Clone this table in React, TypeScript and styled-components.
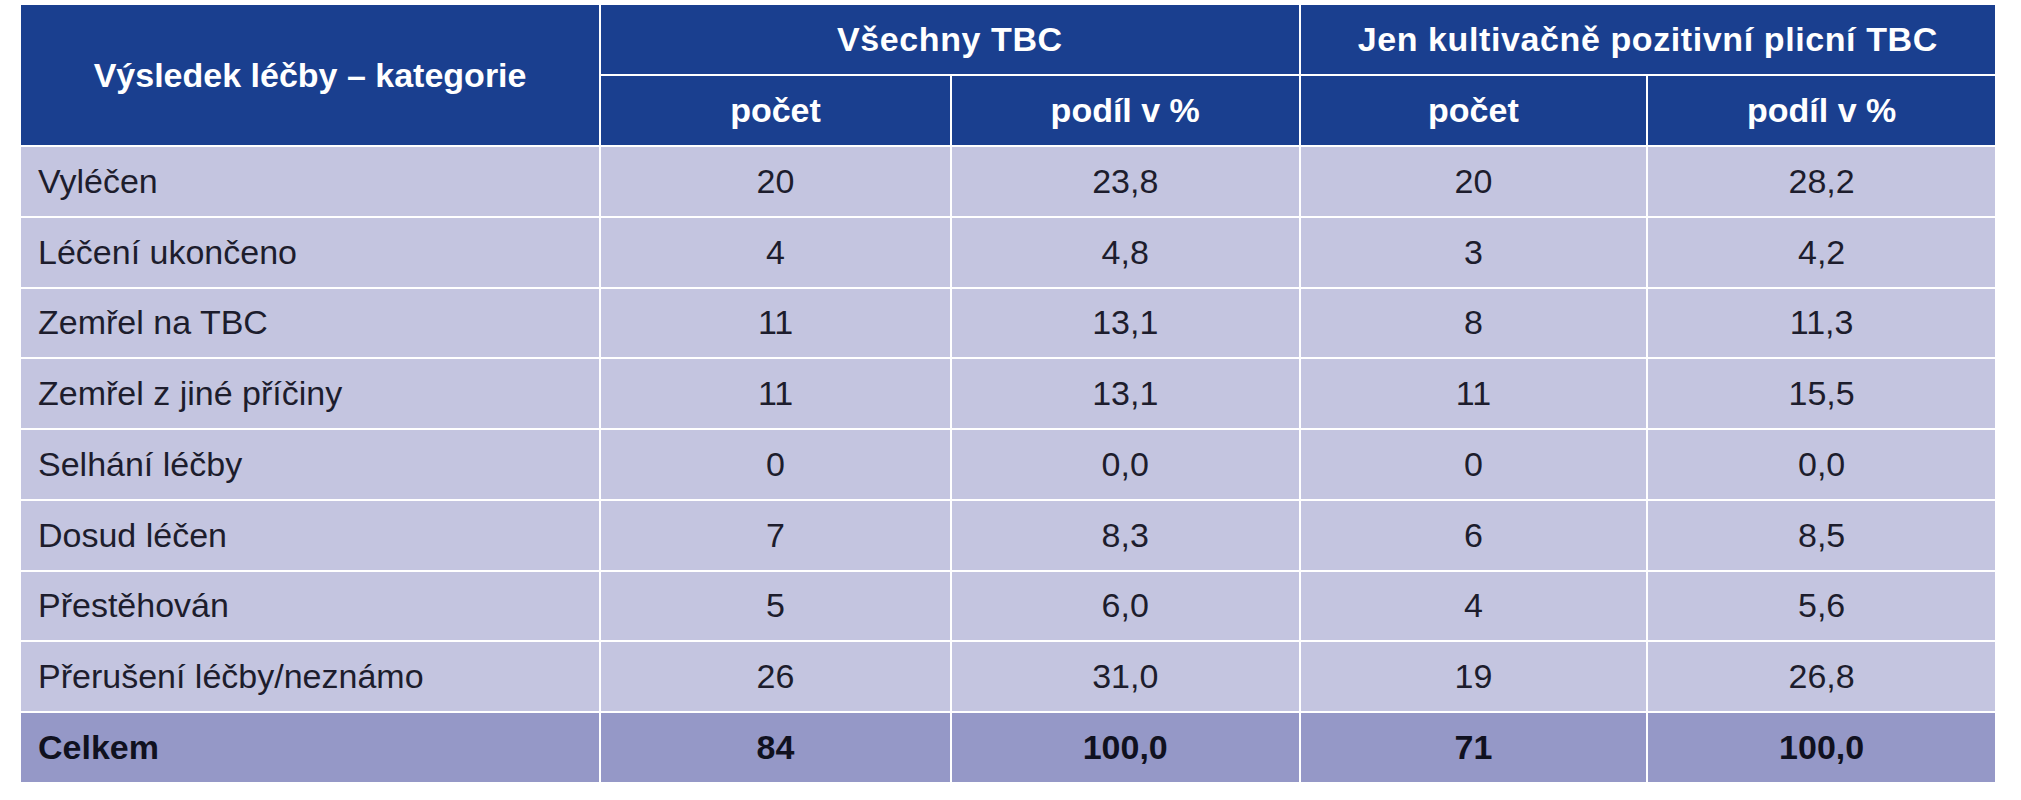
import React from "react";
import styled, { createGlobalStyle } from "styled-components";

const GlobalStyle = createGlobalStyle`
  html, body {
    margin: 0;
    padding: 0;
    background: #ffffff;
  }
  body {
    font-family: "Liberation Sans", Arial, sans-serif;
  }
`;

const Page = styled.div`
  padding: 3px 0 0 19px;
`;

const Table = styled.table`
  border-collapse: separate;
  border-spacing: 2px;
  table-layout: fixed;
  width: 1978px;
  background: #ffffff;
  font-family: "Liberation Sans", Arial, sans-serif;
`;

const HeadCell = styled.th<{ $group?: boolean }>`
  background: #1a3f8f;
  color: #ffffff;
  font-weight: 700;
  font-size: 34px;
  text-align: center;
  vertical-align: middle;
  height: 69px;
  padding: 0;
  letter-spacing: ${(p) => (p.$group ? "0.6px" : "0")};
`;

const Cell = styled.td<{ $total?: boolean; $label?: boolean }>`
  background: ${(p) => (p.$total ? "#9598c7" : "#c4c5e0")};
  color: ${(p) => (p.$total ? "#10111f" : "#1d1d2d")};
  font-weight: ${(p) => (p.$total ? 700 : 400)};
  font-size: 34px;
  text-align: ${(p) => (p.$label ? "left" : "center")};
  padding: 0 0 0 ${(p) => (p.$label ? 17 : 0)}px;
  vertical-align: middle;
  height: ${(p) => (p.$total ? 69 : 68.75)}px;
  white-space: nowrap;
`;

type Row = [string, string, string, string, string];

const rows: Row[] = [
  ["Vyléčen", "20", "23,8", "20", "28,2"],
  ["Léčení ukončeno", "4", "4,8", "3", "4,2"],
  ["Zemřel na TBC", "11", "13,1", "8", "11,3"],
  ["Zemřel z jiné příčiny", "11", "13,1", "11", "15,5"],
  ["Selhání léčby", "0", "0,0", "0", "0,0"],
  ["Dosud léčen", "7", "8,3", "6", "8,5"],
  ["Přestěhován", "5", "6,0", "4", "5,6"],
  ["Přerušení léčby/neznámo", "26", "31,0", "19", "26,8"],
];

const total: Row = ["Celkem", "84", "100,0", "71", "100,0"];

export default function App() {
  return (
    <>
      <GlobalStyle />
      <Page>
        <Table>
          <colgroup>
            <col style={{ width: 577 }} />
            <col style={{ width: 348 }} />
            <col style={{ width: 346 }} />
            <col style={{ width: 345 }} />
            <col style={{ width: 346 }} />
          </colgroup>
          <thead>
            <tr>
              <HeadCell rowSpan={2}>Výsledek léčby – kategorie</HeadCell>
              <HeadCell colSpan={2} $group>
                Všechny TBC
              </HeadCell>
              <HeadCell colSpan={2} $group>
                Jen kultivačně pozitivní plicní TBC
              </HeadCell>
            </tr>
            <tr>
              <HeadCell>počet</HeadCell>
              <HeadCell>podíl v %</HeadCell>
              <HeadCell>počet</HeadCell>
              <HeadCell>podíl v %</HeadCell>
            </tr>
          </thead>
          <tbody>
            {rows.map((r) => (
              <tr key={r[0]}>
                {r.map((v, i) => (
                  <Cell key={i} $label={i === 0}>
                    {v}
                  </Cell>
                ))}
              </tr>
            ))}
            <tr>
              {total.map((v, i) => (
                <Cell key={i} $label={i === 0} $total>
                  {v}
                </Cell>
              ))}
            </tr>
          </tbody>
        </Table>
      </Page>
    </>
  );
}
